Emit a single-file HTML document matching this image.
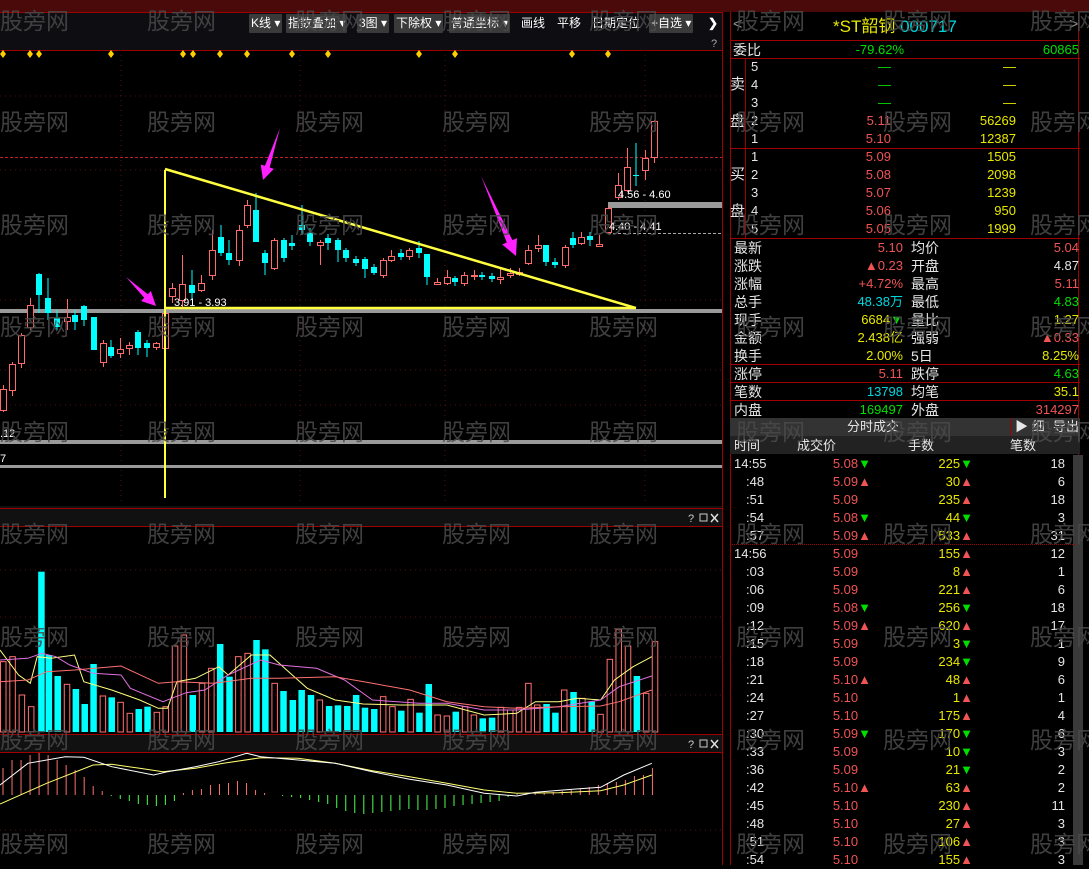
<!DOCTYPE html>
<html><head><meta charset="utf-8">
<style>
*{margin:0;padding:0;box-sizing:border-box}
body{width:1089px;height:865px;background:#000;overflow:hidden;position:relative;font-family:"Liberation Sans","Noto Sans CJK SC","WenQuanYi Zen Hei",sans-serif;color:#ddd}
.abs{position:absolute}
.tb{position:absolute;top:14px;height:19px;background:#3a3a3a;color:#fff;font-size:12px;line-height:19px;padding:0 2px;border-radius:1px;white-space:nowrap}
.tbn{position:absolute;top:14px;height:19px;color:#fff;font-size:12px;line-height:19px}
.wm{position:absolute;color:#4a4a4a;font-size:23px;white-space:nowrap;z-index:50;opacity:.85}
.rp{position:absolute;left:725px;width:364px;font-size:13px}
.row{position:absolute;height:18px;line-height:18px;white-space:nowrap}
.r{color:#f05454}.g{color:#00e000}.y{color:#e8e800}.c{color:#00d8e0}.w{color:#e6e6e6}
.hl{position:absolute;left:0;height:1px;background:#a00000}
</style></head><body>

<svg class="abs" style="left:0;top:0" width="725" height="865" id="sv">
 <rect x="0" y="0" width="725" height="12" fill="#4a0a0a"/>
 <rect x="0" y="12" width="722" height="38" fill="#0d0d12"/>
 <line x1="0" y1="12.5" x2="722" y2="12.5" stroke="#a00000"/>
 <line x1="0" y1="50.5" x2="722" y2="50.5" stroke="#a00000"/>
 <line x1="722.5" y1="12" x2="722.5" y2="865" stroke="#a00000"/>
 <line x1="0" y1="157.5" x2="722" y2="157.5" stroke="#c02020" stroke-dasharray="3,2"/>
 <g stroke="#501010" stroke-dasharray="1,4">
  <line x1="0" y1="96" x2="722" y2="96"/><line x1="0" y1="170" x2="722" y2="170"/>
  <line x1="0" y1="300" x2="722" y2="300"/><line x1="0" y1="370" x2="722" y2="370"/>
  <line x1="0" y1="405" x2="722" y2="405"/>
  <line x1="121" y1="50" x2="121" y2="505"/><line x1="300" y1="50" x2="300" y2="505"/>
  <line x1="445" y1="50" x2="445" y2="505"/><line x1="645" y1="50" x2="645" y2="505"/>
  <line x1="0" y1="570" x2="722" y2="570"/><line x1="0" y1="617" x2="722" y2="617"/><line x1="0" y1="657" x2="722" y2="657"/><line x1="0" y1="695" x2="722" y2="695"/>
  <line x1="0" y1="830" x2="722" y2="830"/>
 </g>
 <rect x="0" y="309" width="722" height="4" fill="#9a9a9a"/>
 <rect x="0" y="440" width="722" height="4" fill="#9a9a9a"/>
 <rect x="0" y="465" width="722" height="3" fill="#9a9a9a"/>
 <rect x="608" y="202" width="114" height="6" fill="#9a9a9a"/>
 <line x1="608" y1="233.5" x2="722" y2="233.5" stroke="#aaa" stroke-dasharray="3,2"/>
 <rect x="0" y="506" width="722" height="20" fill="#111"/>
 <line x1="0" y1="508.5" x2="722" y2="508.5" stroke="#a00000"/>
 <line x1="0" y1="526.5" x2="722" y2="526.5" stroke="#a00000"/>
 <rect x="0" y="734" width="722" height="18" fill="#111"/>
 <line x1="0" y1="734.5" x2="722" y2="734.5" stroke="#a00000"/>
 <line x1="0" y1="752.5" x2="722" y2="752.5" stroke="#a00000"/>
 <g id="dyn"></g>
 <line x1="165" y1="170" x2="165" y2="498" stroke="#ffff40" stroke-width="2"/>
 <line x1="165" y1="169" x2="636" y2="308" stroke="#ffff40" stroke-width="2.5"/>
 <line x1="165" y1="308" x2="636" y2="308" stroke="#ffff40" stroke-width="2.5"/>
 <g fill="#ff20ff">
  <polygon points="126,277 147.8,294.2 150.9,291 156,306 141.1,301 144.2,297.8"/>
  <polygon points="280,128 269.7,167.5 273.9,168.9 263,180 260.7,164.5 264.9,165.9"/>
  <polygon points="481,176 512.4,240.1 517,238.1 516,256 502.2,244.5 506.8,242.5"/>
 </g>
 <g font-size="11" fill="#fff" font-family="Liberation Sans,sans-serif">
  <text x="174" y="306">3.91 - 3.93</text>
  <text x="618" y="198">4.56 - 4.60</text>
  <text x="609" y="230">4.40 - 4.41</text>
  <text x="0" y="437">.12</text>
  <text x="0" y="462">7</text>
  <text x="711" y="47" fill="#aaa">?</text>
  <text x="688" y="522" fill="#ccc">?</text><text x="688" y="748" fill="#ccc">?</text>
 </g>
 <g fill="none" stroke="#ccc"><rect x="700" y="514" width="7" height="7"/><rect x="700" y="740" width="7" height="7"/></g>
 <g stroke="#ddd" stroke-width="1.5"><path d="M711 514l7 8M718 514l-7 8M711 740l7 8M718 740l-7 8"/></g>
</svg>

<div class="tb" style="left:249px">K线 ▾</div>
<div class="tb" style="left:286px">指数叠加 ▾</div>
<div class="tb" style="left:357px">3图 ▾</div>
<div class="tb" style="left:394px">下除权 ▾</div>
<div class="tb" style="left:449px">普通坐标 ▾</div>
<div class="tbn" style="left:521px">画线</div>
<div class="tbn" style="left:557px">平移</div>
<div class="tbn" style="left:592px">日期定位</div>
<div class="tb" style="left:649px">+自选 ▾</div>
<div class="tbn" style="left:708px;font-weight:bold">&#x276F;</div>

<div class="abs" style="left:722px;top:0;width:367px;height:12px;background:#4a0a0a"></div>
<div class="abs" style="left:730px;top:12px;width:349px;height:853px;border-left:1px solid #a00000;border-right:1px solid #a00000"></div>
<div class="rp" style="top:12px;height:28px">
 <div class="row" style="left:8px;top:4px;color:#888;font-size:16px">&lt;</div>
 <div class="row" style="left:108px;top:4px;font-size:17px;height:22px;line-height:22px"><span class="y">*ST韶钢</span> <span class="c">000717</span></div>
 <div class="row" style="left:344px;top:4px;color:#888;font-size:16px">&gt;</div>
</div>
<div class="hl" style="left:730px;width:350px;top:40px"></div>
<div class="rp" id="rp" style="top:0;height:865px"></div>
<div class="abs" style="left:730px;top:418px;width:350px;height:18px;background:#333"></div>
<div class="abs" style="left:1010px;top:418px;width:1px;height:18px;background:#a00000"></div>
<div class="abs" style="left:730px;top:436px;width:350px;height:18px;background:#222"></div>
<div class="abs" style="left:1073px;top:455px;width:10px;height:410px;background:#3a3a3a"></div>
<div class="rp" id="rp2" style="top:0;height:865px"></div>
<div id="wms"></div>

<script>
var NS="http://www.w3.org/2000/svg",g=document.getElementById("dyn");
function el(t,a){var e=document.createElementNS(NS,t);for(var k in a)e.setAttribute(k,a[k]);g.appendChild(e);return e;}
[3,30,39,111,183,193,220,247,292,328,419,455,572,608].forEach(function(x){el("polygon",{points:(x)+",50 "+(x+3)+",54 "+x+",58 "+(x-3)+",54",fill:"#ffd000"});});
var K=[[3,389,410,0,385,412],[12,364,390,0,362,396],[21,335,363,0,333,368],[30,305,327,0,298,330],[39,274,295,1,273,313],[48,298,313,1,278,320],[57,318,327,1,310,330],[67,317,321,0,299,330],[75,315,322,1,310,330],[84,306,320,1,305,326],[94,317,350,1,317,350],[103,343,362,0,340,367],[111,347,356,1,340,358],[120,349,353,0,338,358],[129,345,348,0,342,355],[138,332,348,1,330,355],[147,343,348,1,340,357],[156,343,347,0,342,350],[165,313,348,0,310,348],
[172,288,296,0,283,303],[182,284,300,0,255,310],[192,285,293,1,270,300],[201,283,290,0,275,292],[212,250,275,0,230,280],[221,237,253,1,225,256],[229,253,260,1,240,265],[239,230,260,0,225,266],[247,205,225,0,200,228],[256,210,242,1,193,242],[265,253,263,1,250,275],[274,240,268,0,238,270],[284,240,258,1,238,262],[292,243,246,1,235,250],[302,225,230,1,205,235],[310,233,242,1,228,246],[320,242,245,0,240,265],[328,238,243,1,234,250],[338,240,250,1,238,262],[346,250,258,1,248,262],[356,259,263,1,256,266],[365,259,269,1,257,278],[374,267,273,1,264,275],[383,260,275,0,258,278],[391,256,260,0,250,262],[401,253,257,1,249,260],[409,250,256,0,248,260],[419,248,253,1,241,258],[427,254,277,1,254,285],[437,282,284,0,278,285],[447,277,283,0,270,285],[455,278,282,1,276,286],[464,275,283,0,272,286],[474,275,276,0,270,280],[482,275,277,1,272,280],[492,276,279,1,273,282],[500,277,279,0,268,284],[510,273,275,0,268,278],[519,272,274,0,268,276],[528,250,263,0,245,265],[538,245,248,0,235,252],[546,245,262,1,245,266],[555,262,265,1,258,268],[565,247,265,0,245,268],[573,238,245,1,232,248],[581,237,243,0,232,245],[590,236,240,1,232,246],[599,244,246,0,235,247],[608,208,232,0,206,232],[618,185,197,0,173,200],[627,167,190,0,148,192],[636,175,176,1,143,186],[645,158,170,0,150,180],[654,121,157,0,120,163]];
K.forEach(function(k){var x=k[0];if(k[3]){el("line",{x1:x,y1:k[4],x2:x,y2:k[5],stroke:"#00ffff"});el("rect",{x:x-3,y:k[1],width:6,height:Math.max(1,k[2]-k[1]),fill:"#00ffff"});}
else{el("line",{x1:x+.5,y1:k[4],x2:x+.5,y2:k[5],stroke:"#ff6a6a"});el("rect",{x:x-2.5,y:k[1]+.5,width:6,height:Math.max(1,k[2]-k[1]),fill:"#000",stroke:"#ff6a6a"});}});
var V=[[0,485,0],[20,470,0],[40,585,0],[60,620,0],[82,215,1],[98,465,1],[117,528,1],[137,553,0],[156,567,1],[175,612,1],[194,492,1],[214,588,0],[233,592,1],[252,607,0],[272,640,0],[291,627,1],[310,620,1],[330,637,0],[349,620,0],[369,438,0],[388,405,0],[407,585,1],[427,550,0],[447,505,0],[466,432,1],[486,530,1],[505,470,0],[525,460,0],[544,420,1],[563,448,1],[583,550,0],[602,573,1],[622,600,1],[641,570,1],[661,585,1],[680,600,0],[700,618,1],[719,616,1],[739,618,1],[758,585,1],[777,623,1],[797,627,1],[816,590,0],[836,620,0],[855,632,1],[875,598,0],[894,638,1],[914,552,1],[933,645,0],[953,648,0],[972,635,1],[992,620,0],[1011,645,0],[1030,655,1],[1050,653,1],[1069,622,0],[1089,630,0],[1108,622,0],[1128,550,0],[1147,615,0],[1167,612,1],[1186,638,1],[1205,570,0],[1225,576,1],[1244,595,0],[1264,605,1],[1283,643,0],[1303,478,0],[1322,388,0],[1342,438,0],[1361,528,1],[1381,580,0],[1400,425,0]];
V.forEach(function(v){var x=v[0]/2.148,t=v[1]/3+500;if(v[2])el("rect",{x:x,y:t,width:6.5,height:732-t,fill:"#00ffff"});else el("rect",{x:x+.5,y:t,width:5.5,height:732-t,fill:"none",stroke:"#ff7070"});});
function pl(p,c){var s=[];for(var i=0;i<p.length;i+=2)s.push((p[i]/2.148).toFixed(1)+","+(p[i+1]/3+500).toFixed(1));el("polyline",{points:s.join(" "),fill:"none",stroke:c,"stroke-width":1});}
pl([0,450,40,525,65,550,80,470,110,475,160,465,180,545,240,570,300,600,340,625,360,625,380,545,420,535,470,500,490,525,540,465,580,465,620,515,660,565,720,600,780,612,860,615,960,615,1040,645,1110,640,1150,605,1200,605,1240,595,1290,600,1320,540,1360,500,1400,470],"#ffff80");
pl([0,480,60,475,90,460,120,470,150,495,200,520,260,525,280,565,350,605,400,578,440,570,490,525,560,480,600,495,680,505,740,540,800,600,900,610,960,610,1040,630,1110,630,1200,620,1290,600,1330,560,1400,528],"#e070e0");
pl([0,545,60,540,100,515,160,510,260,498,340,550,380,545,460,550,540,535,600,535,720,530,800,550,880,570,960,605,1040,620,1110,625,1200,620,1290,618,1330,605,1400,570],"#ff7070");
var M=[27,35,35,40,42,40,35,30,25,18,9,4,-1,-4,-6,-9,-10,-11,-10,-6,2,5,6,10,11,12,14,12,5,2,0,-1,-2,-3,-5,-7,-9,-13,-16,-18,-19,-18,-17,-16,-15,-14,-15,-15,-14,-13,-11,-10,-9,-8,-7,-6,-2,1,1,2,2,3,4,5,6,8,10,12,13,15,19,20,27];
M.forEach(function(v,i){var x=3+i*9.02;el("line",{x1:x,y1:795,x2:x,y2:795-v,stroke:v>=0?"#ff7070":"#50ff50"});});
pl([0,912,100,850,200,795,240,793,300,805,350,815,420,805,480,790,560,773,640,775,720,790,800,812,880,830,960,850,1040,870,1110,880,1200,878,1290,872,1340,855,1400,825],"#ffff70");
pl([0,855,60,790,140,770,180,772,240,800,330,825,360,815,420,800,470,785,530,760,560,770,640,780,720,790,800,815,880,838,960,855,1040,880,1110,888,1150,877,1230,868,1290,862,1340,825,1400,790],"#ffffff");

var rp=document.getElementById("rp"),H="";
function row(top,l,t,cls,extra){return '<div class="row '+(cls||"")+'" style="top:'+top+'px;'+(l<0?'right:'+(-l)+'px':'left:'+l+'px')+';'+(extra||"")+'">'+t+'</div>';}
function hl(y){return '<div class="hl" style="left:5px;width:350px;top:'+y+'px"></div>';}
H+=row(41,8,"委比","w","font-size:14px")+row(41,-185,"-79.62%","g")+row(41,-10,"60865","g");
H+=hl(58);
var sell=[["5","—","—"],["4","—","—"],["3","—","—"],["2","5.11","56269"],["1","5.10","12387"]];
sell.forEach(function(s,i){var t=58+i*18;H+=row(t,26,s[0],"w")+row(t,-198,s[1],i<3?"g":"r")+row(t,-73,s[2],"y");});
H+=row(76,5,"卖","w","font-size:15px")+row(113,5,"盘","w","font-size:15px");
H+=hl(148);
var buy=[["1","5.09","1505"],["2","5.08","2098"],["3","5.07","1239"],["4","5.06","950"],["5","5.05","1999"]];
buy.forEach(function(s,i){var t=148+i*18;H+=row(t,26,s[0],"w")+row(t,-198,s[1],"r")+row(t,-73,s[2],"y");});
H+=row(166,5,"买","w","font-size:15px")+row(203,5,"盘","w","font-size:15px");
H+='<div class="abs" style="left:20px;top:58px;width:1px;height:180px;background:#a00000"></div>';
H+=hl(238);
var st=[["最新","5.10","r","均价","5.04","r"],["涨跌","▲0.23","r","开盘","4.87","w"],["涨幅","+4.72%","r","最高","5.11","r"],["总手","48.38万","c","最低","4.83","g"],["现手","6684<span class=g>▼</span>","y","量比","1.27","y"],["金额","2.438亿","y","强弱","<span class=r>▲</span>0.33","r"],["换手","2.00%","y","5日","8.25%","y"]];
st.forEach(function(s,i){var t=239+i*18;H+=row(t,9,s[0],"w","font-size:14px")+row(t,-186,s[1],s[2])+row(t,186,s[3],"w","font-size:14px")+row(t,-10,s[4],s[5]);});
H+=hl(364);
[["涨停","5.11","r","跌停","4.63","g"],["笔数","13798","c","均笔","35.1","y"],["内盘","169497","g","外盘","314297","r"]].forEach(function(s,i){var t=365+i*18;H+=row(t,9,s[0],"w","font-size:14px")+row(t,-186,s[1],s[2])+row(t,186,s[3],"w","font-size:14px")+row(t,-10,s[4],s[5]);H+=hl(382+i*18);});
rp.innerHTML=H;
var H2="";
H2+=row(418,122,"分时成交","w")+row(418,290,"▶ 细","w")+row(418,328,"导出","w");
H2+=row(437,9,"时间","w")+row(437,72,"成交价","w")+row(437,183,"手数","w")+row(437,285,"笔数","w");
var T=[["14:55","5.08","v","225","v","18"],[":48","5.09","^","30","^","6"],[":51","5.09","","235","^","18"],[":54","5.08","v","44","v","3"],[":57","5.09","^","533","^","31"],["14:56","5.09","","155","^","12"],[":03","5.09","","8","^","1"],[":06","5.09","","221","^","6"],[":09","5.08","v","256","v","18"],[":12","5.09","^","620","^","17"],[":15","5.09","","3","v","1"],[":18","5.09","","234","v","9"],[":21","5.10","^","48","^","6"],[":24","5.10","","1","^","1"],[":27","5.10","","175","^","4"],[":30","5.09","v","170","v","6"],[":33","5.09","","10","v","3"],[":36","5.09","","21","v","2"],[":42","5.10","^","63","^","2"],[":45","5.10","","230","^","11"],[":48","5.10","","27","^","3"],[":51","5.10","","106","^","3"],[":54","5.10","","155","^","3"]];
function ar(a){return a=="^"?'<span class=r>▲</span>':a=="v"?'<span class=g>▼</span>':'<span style="visibility:hidden">▲</span>';}
T.forEach(function(t,i){var y=455+i*18;H2+=row(y,t[0].length>3?9:21,t[0],"w")+row(y,-218,t[1]+ar(t[2]),"r")+row(y,-116,t[3]+ar(t[4]),"y")+row(y,-24,t[5],"w");});
H2+='<div class="abs" style="left:5px;top:544px;width:345px;border-top:1px dotted #a00000"></div>';
document.getElementById("rp2").innerHTML=H2;
var W="",xs=[0,147,295,442,589,736,883,1030],ys=[2,103,206,308,413,515,618,721,825];
ys.forEach(function(y){xs.forEach(function(x){W+='<div class="wm" style="left:'+x+'px;top:'+y+'px">股旁网</div>';});});
document.getElementById("wms").innerHTML=W;
</script>
</body></html>
